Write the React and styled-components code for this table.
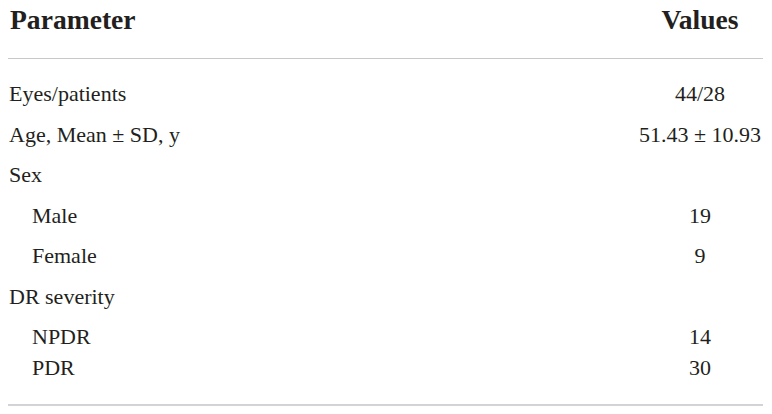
import React from 'react';
import styled, { createGlobalStyle } from 'styled-components';

const GlobalStyle = createGlobalStyle`
  html, body {
    margin: 0;
    padding: 0;
    background: #fff;
  }
`;

const TableWrapper = styled.div`
  width: 755px;
  margin-left: 8px;
  font-family: "Liberation Serif", "Times New Roman", serif;
  color: #231f20;
`;

const HeaderRow = styled.div`
  display: grid;
  grid-template-columns: 1fr 124px;
  padding: 2px 1px 20px 1px;
  border-bottom: 1px solid #c9c9c9;
  font-size: 27.6px;
  font-weight: bold;
  line-height: 36px;
`;

const Body = styled.div`
  padding: 15px 0 15px;
  border-bottom: 2px solid #d3d3d3;
`;

const Row = styled.div`
  display: grid;
  grid-template-columns: 1fr 124px;
  height: ${props => (props.tight ? '31px' : '40.5px')};
  padding-right: 1px;
  font-size: 22px;
  line-height: 40px;
`;

const Label = styled.div`
  padding-left: ${props => (props.indent ? '24px' : '1px')};
  white-space: nowrap;
`;

const Value = styled.div`
  text-align: center;
  white-space: nowrap;
`;

const rows = [
  { label: 'Eyes/patients', value: '44/28' },
  { label: 'Age, Mean ± SD, y', value: '51.43 ± 10.93' },
  { label: 'Sex', value: '' },
  { label: 'Male', value: '19', indent: true },
  { label: 'Female', value: '9', indent: true },
  { label: 'DR severity', value: '' },
  { label: 'NPDR', value: '14', indent: true, tight: true },
  { label: 'PDR', value: '30', indent: true },
];

export default function App() {
  return (
    <>
      <GlobalStyle />
      <TableWrapper>
        <HeaderRow>
          <Label>Parameter</Label>
          <Value>Values</Value>
        </HeaderRow>
        <Body>
          {rows.map(row => (
            <Row key={row.label} tight={row.tight}>
              <Label indent={row.indent}>{row.label}</Label>
              <Value>{row.value}</Value>
            </Row>
          ))}
        </Body>
      </TableWrapper>
    </>
  );
}
